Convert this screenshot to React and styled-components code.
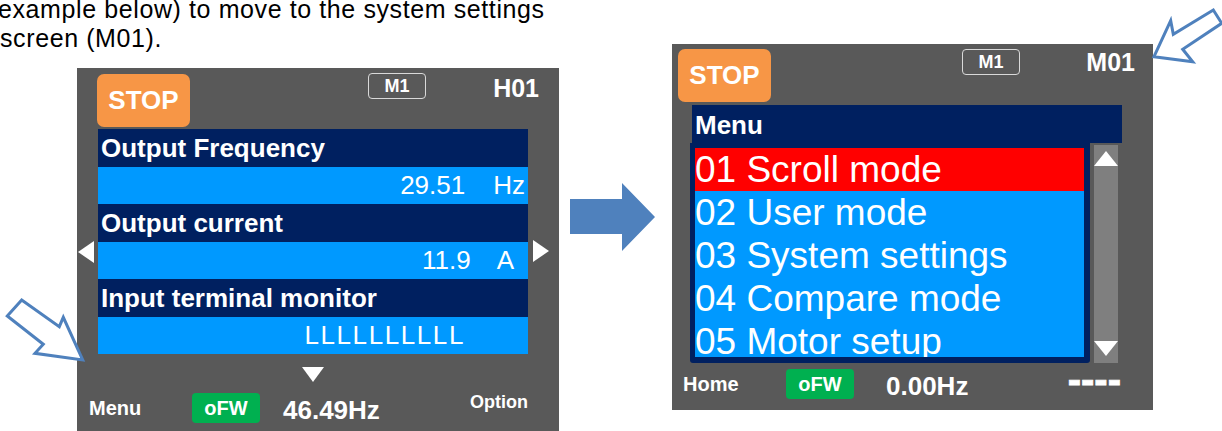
import React from "react";
import styled, { createGlobalStyle } from "styled-components";

const NAVY = "#002060";
const SKY = "#0099FF";
const PANEL = "#595959";
const ARROW_BLUE = "#4F81BD";

const GlobalStyle = createGlobalStyle`
  html, body { margin: 0; padding: 0; background: #fff; overflow: hidden; }
  body { font-family: "Liberation Sans", Arial, Helvetica, sans-serif; }
`;

const Page = styled.div`
  position: relative;
  display: flex;
  align-items: flex-start;
  width: 1222px;
  height: 431px;
  overflow: hidden;
`;

const LeftColumn = styled.div`
  flex: none;
  display: flex;
  flex-direction: column;
  width: 559px;
`;

const Caption = styled.div`
  margin-top: -5px;
  font-size: 25px;
  line-height: 29px;
  letter-spacing: 0.6px;
  color: #000;
  white-space: nowrap;
`;

const CaptionLine = styled.div`
  margin-left: ${(p) => p.$indent || 0}px;
`;

const Panel = styled.section`
  flex: none;
  display: flex;
  flex-direction: column;
  width: ${(p) => p.$w}px;
  height: ${(p) => p.$h}px;
  margin: ${(p) => p.$mt}px 0 0 ${(p) => p.$ml}px;
  background: ${PANEL};
  color: #fff;
  overflow: hidden;
`;

const TopBar = styled.div`
  flex: none;
  display: flex;
  align-items: flex-start;
  height: 61px;
`;

const StopBadge = styled.div`
  flex: none;
  width: 93px;
  height: 53px;
  margin: ${(p) => p.$mt}px 0 0 ${(p) => p.$ml}px;
  background: #f79646;
  border-radius: 7px;
  display: flex;
  align-items: center;
  justify-content: center;
  font-size: 26px;
  font-weight: 700;
`;

const ModeBox = styled.div`
  flex: none;
  box-sizing: border-box;
  width: 58px;
  height: 26px;
  margin: 5px 0 0 auto;
  border: 1.5px solid #d9d9d9;
  border-radius: 4px;
  display: flex;
  align-items: center;
  justify-content: center;
  font-size: 18px;
  font-weight: 700;
`;

const ScreenCode = styled.div`
  flex: none;
  box-sizing: border-box;
  width: 133px;
  padding-right: ${(p) => p.$pr}px;
  margin-top: ${(p) => p.$mt}px;
  text-align: right;
  font-size: 25px;
  line-height: 25px;
  font-weight: 700;
`;

const MonitorBody = styled.div`
  flex: none;
  display: flex;
  height: 225px;
`;

const SideGutter = styled.div`
  flex: none;
  box-sizing: border-box;
  width: ${(p) => p.$w}px;
  padding-top: ${(p) => p.$pt}px;
  padding-left: ${(p) => p.$pl}px;
`;

const Tri = styled.div`
  flex: none;
  width: 0;
  height: 0;
  border: 0 solid transparent;
  ${({ $dir, $len, $half }) => {
    switch ($dir) {
      case "left":
        return `border-right: ${$len}px solid #fff; border-top-width: ${$half}px; border-bottom-width: ${$half}px;`;
      case "right":
        return `border-left: ${$len}px solid #fff; border-top-width: ${$half}px; border-bottom-width: ${$half}px;`;
      case "up":
        return `border-bottom: ${$len}px solid #fff; border-left-width: ${$half}px; border-right-width: ${$half}px;`;
      default:
        return `border-top: ${$len}px solid #fff; border-left-width: ${$half}px; border-right-width: ${$half}px;`;
    }
  }}
`;

const MonitorList = styled.div`
  flex: none;
  display: flex;
  flex-direction: column;
  width: 430px;
`;

const HeaderRow = styled.div`
  box-sizing: border-box;
  height: 37.5px;
  line-height: 39px;
  padding-left: 3px;
  background: ${NAVY};
  font-size: 26px;
  font-weight: 700;
  white-space: nowrap;
`;

const ValueRow = styled.div`
  box-sizing: border-box;
  display: flex;
  justify-content: flex-end;
  align-items: center;
  height: 37.5px;
  padding-right: ${(p) => p.$pr}px;
  background: ${SKY};
  font-size: 26px;
  white-space: nowrap;
`;

const Reading = styled.span`
  letter-spacing: ${(p) => p.$spacing || 0}px;
`;

const Unit = styled.span`
  margin-left: ${(p) => p.$gap}px;
`;

const PageHint = styled.div`
  flex: none;
  display: flex;
  justify-content: center;
  width: 430px;
  margin-left: 21px;
  padding-top: 13px;
`;

const StatusBar = styled.div`
  flex: none;
  box-sizing: border-box;
  display: flex;
  align-items: center;
  height: 30px;
  margin-top: ${(p) => p.$mt}px;
  padding: 0 ${(p) => p.$pr}px 0 ${(p) => p.$pl}px;
`;

const SoftKey = styled.div`
  flex: none;
  width: ${(p) => (p.$w ? `${p.$w}px` : "auto")};
  margin-left: ${(p) => (p.$end ? "auto" : "0")};
  margin-bottom: ${(p) => p.$lift || 0}px;
  font-size: ${(p) => p.$fs}px;
  font-weight: 700;
  white-space: nowrap;
`;

const DirBadge = styled.div`
  flex: none;
  width: 68px;
  height: 30px;
  border-radius: 4px;
  background: #00b050;
  display: flex;
  align-items: center;
  justify-content: center;
  font-size: 20px;
  font-weight: 700;
`;

const Frequency = styled.div`
  flex: none;
  margin-left: ${(p) => p.$ml}px;
  margin-top: 4px;
  font-size: 26px;
  font-weight: 700;
`;

const Dashes = styled.div`
  flex: none;
  margin-left: auto;
  margin-bottom: 10px;
  font-size: 40px;
  font-weight: 700;
  line-height: 40px;
  -webkit-text-stroke: 0.8px #fff;
`;

const MenuTitle = styled.div`
  flex: none;
  box-sizing: border-box;
  width: 430px;
  height: 38px;
  line-height: 40px;
  margin-left: 20px;
  padding-left: 3px;
  background: ${NAVY};
  font-size: 26px;
  font-weight: 700;
`;

const MenuArea = styled.div`
  flex: none;
  display: flex;
  align-items: flex-start;
  height: 220px;
  margin-left: 18px;
`;

const MenuFrame = styled.div`
  flex: none;
  box-sizing: border-box;
  width: 400px;
  height: 220px;
  border: solid ${NAVY};
  border-width: 5px 6px 6px 5px;
  border-radius: 0 0 3px 3px;
  background: ${SKY};
  overflow: hidden;
`;

const MenuItem = styled.div`
  height: 43px;
  line-height: 44px;
  background: ${(p) => (p.$active ? "#ff0000" : SKY)};
  font-size: 37px;
  white-space: nowrap;
`;

const ScrollTrack = styled.div`
  flex: none;
  box-sizing: border-box;
  width: 24px;
  height: 218px;
  margin: 2px 0 0 4px;
  padding: 6px 0 7px;
  background: #7f7f7f;
  display: flex;
  flex-direction: column;
  justify-content: space-between;
  align-items: center;
`;

const BigArrow = styled.svg`
  flex: none;
  display: block;
  margin: 183px 0 0 11px;
`;

const Callout = styled.svg`
  position: absolute;
  left: ${(p) => p.$x}px;
  top: ${(p) => p.$y}px;
  overflow: visible;
`;

const monitorRows = [
  { title: "Output Frequency", value: "29.51", unit: "Hz", pr: 3, gap: 28 },
  { title: "Output current", value: "11.9", unit: "A", pr: 14, gap: 26 },
  { title: "Input terminal monitor", value: "LLLLLLLLLL", pr: 63, spacing: 1.6 },
];

const menuItems = [
  "01 Scroll mode",
  "02 User mode",
  "03 System settings",
  "04 Compare mode",
  "05 Motor setup",
];

export default function App() {
  return (
    <>
      <GlobalStyle />
      <Page>
        <LeftColumn>
          <Caption>
            <CaptionLine $indent={-2}>example below) to move to the system settings</CaptionLine>
            <CaptionLine>screen (M01).</CaptionLine>
          </Caption>
          <Panel $w={482} $h={363} $mt={15} $ml={77}>
            <TopBar>
              <StopBadge $ml={20} $mt={6}>STOP</StopBadge>
              <ModeBox>M1</ModeBox>
              <ScreenCode $pr={20} $mt={8}>H01</ScreenCode>
            </TopBar>
            <MonitorBody>
              <SideGutter $w={21} $pl={1} $pt={112}>
                <Tri $dir="left" $len={16} $half={11} />
              </SideGutter>
              <MonitorList>
                {monitorRows.map((r) => (
                  <React.Fragment key={r.title}>
                    <HeaderRow>{r.title}</HeaderRow>
                    <ValueRow $pr={r.pr}>
                      <Reading $spacing={r.spacing}>{r.value}</Reading>
                      {r.unit && <Unit $gap={r.gap}>{r.unit}</Unit>}
                    </ValueRow>
                  </React.Fragment>
                ))}
              </MonitorList>
              <SideGutter $w={31} $pl={5} $pt={111}>
                <Tri $dir="right" $len={16} $half={11} />
              </SideGutter>
            </MonitorBody>
            <PageHint>
              <Tri $dir="down" $len={15} $half={11} />
            </PageHint>
            <StatusBar $mt={11} $pl={12} $pr={31}>
              <SoftKey $w={103} $fs={20}>Menu</SoftKey>
              <DirBadge>oFW</DirBadge>
              <Frequency $ml={23}>46.49Hz</Frequency>
              <SoftKey $end $fs={18} $lift={11}>Option</SoftKey>
            </StatusBar>
          </Panel>
        </LeftColumn>

        <BigArrow width="85" height="68" viewBox="0 0 85 68">
          <polygon points="0,16 52,16 52,0 85,34 52,68 52,51 0,51" fill={ARROW_BLUE} />
        </BigArrow>

        <Panel $w={481} $h={366} $mt={44} $ml={17}>
          <TopBar>
            <StopBadge $ml={6} $mt={5}>STOP</StopBadge>
            <ModeBox>M1</ModeBox>
            <ScreenCode $pr={18} $mt={6}>M01</ScreenCode>
          </TopBar>
          <MenuTitle>Menu</MenuTitle>
          <MenuArea>
            <MenuFrame>
              {menuItems.map((m, i) => (
                <MenuItem key={m} $active={i === 0}>{m}</MenuItem>
              ))}
            </MenuFrame>
            <ScrollTrack>
              <Tri $dir="up" $len={15} $half={12} />
              <Tri $dir="down" $len={15} $half={12} />
            </ScrollTrack>
          </MenuArea>
          <StatusBar $mt={6} $pl={11} $pr={32}>
            <SoftKey $w={103} $fs={20}>Home</SoftKey>
            <DirBadge>oFW</DirBadge>
            <Frequency $ml={32}>0.00Hz</Frequency>
            <Dashes>----</Dashes>
          </StatusBar>
        </Panel>

        <Callout $x={0} $y={290} width="90" height="75" viewBox="0 0 90 75">
          <polygon
            points="7.3,26 21.7,10 59.3,36.7 63.3,27.3 82.7,70 35,63.3 43.3,54.3"
            fill="#fff"
            stroke={ARROW_BLUE}
            strokeWidth="3"
          />
        </Callout>
        <Callout $x={1140} $y={0} width="82" height="70" viewBox="0 0 82 70">
          <polygon
            points="14,56.7 30.7,20.7 33.3,34.3 73.3,10 81.7,23.3 42.7,49.3 52.7,61.7"
            fill="#fff"
            stroke={ARROW_BLUE}
            strokeWidth="3"
          />
        </Callout>
      </Page>
    </>
  );
}
